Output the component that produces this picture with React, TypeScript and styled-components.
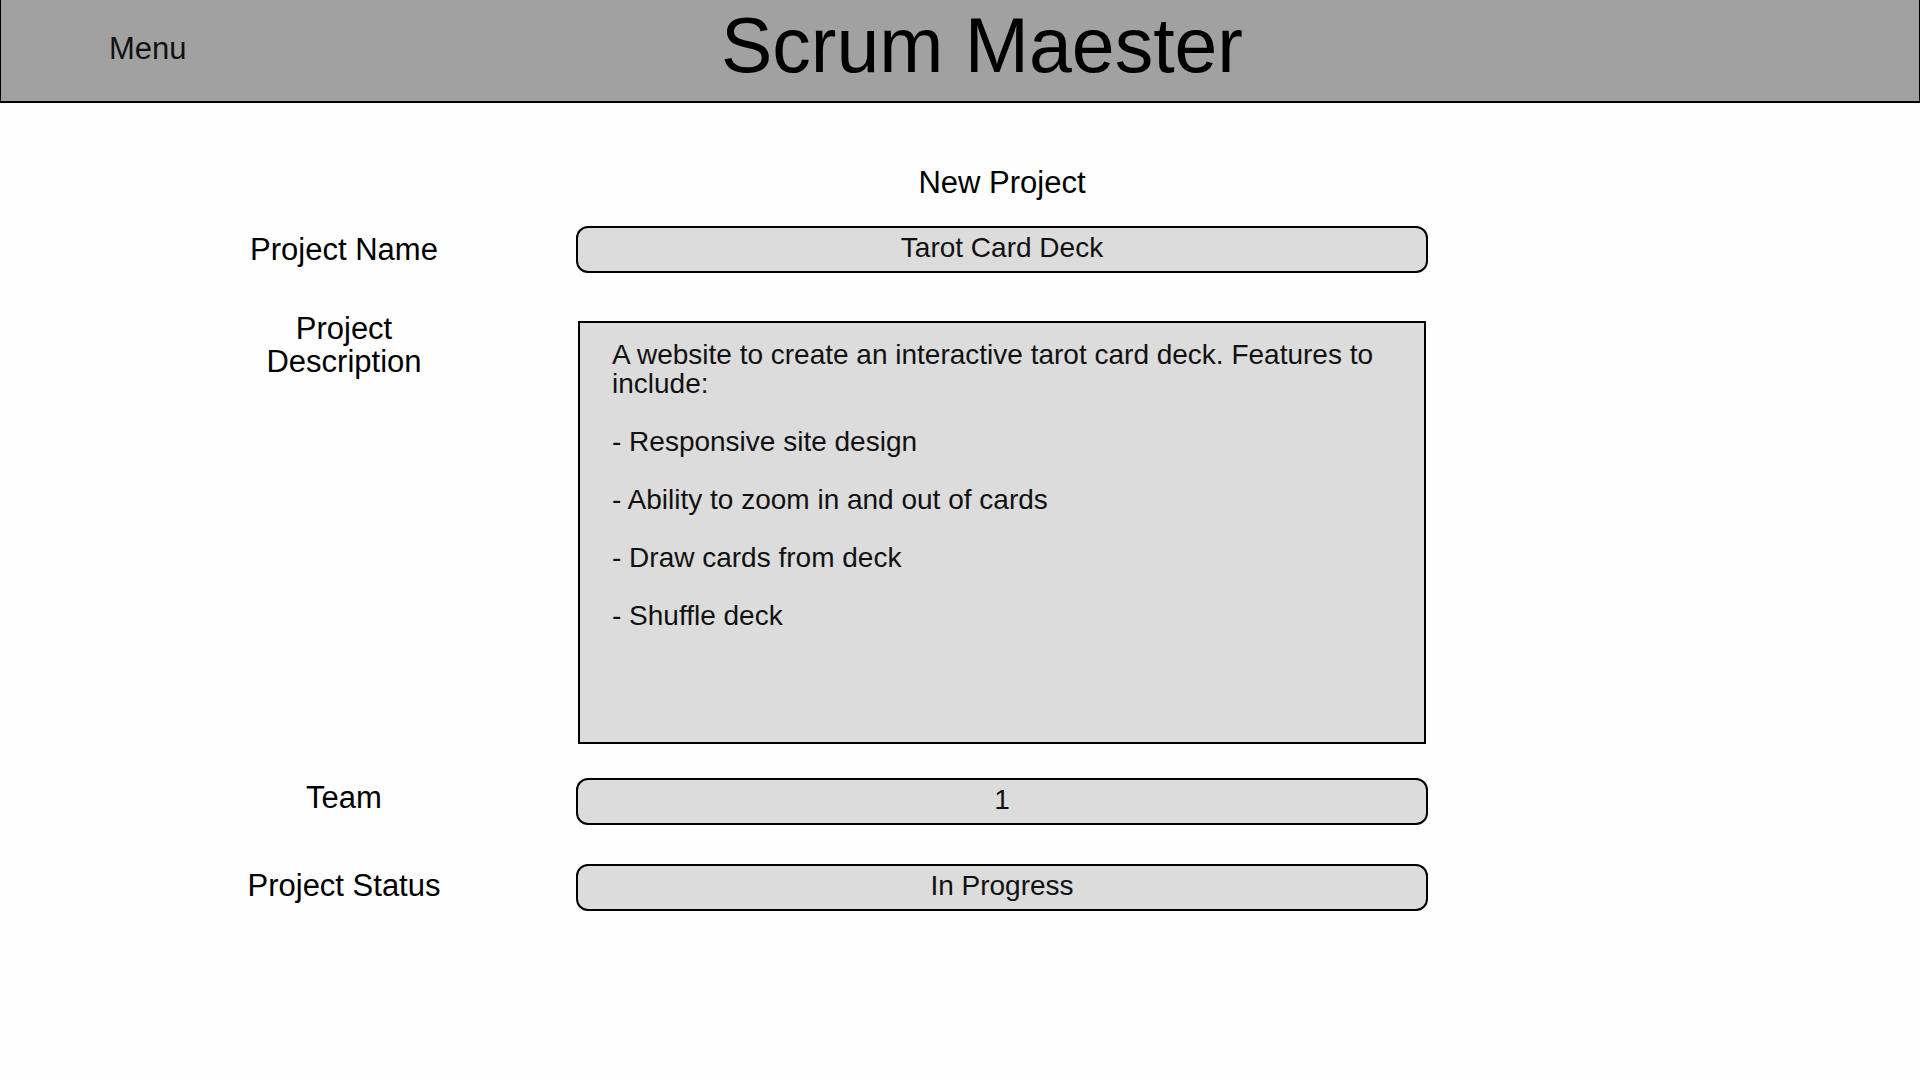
import React from "react";
import styled, { createGlobalStyle } from "styled-components";

const Global = createGlobalStyle`
  *, *::before, *::after { box-sizing: border-box; }
  body { margin: 0; background: #fefefe; color: #000; font-family: "Liberation Sans", Arial, sans-serif; }
`;

const Header = styled.header`
  display: grid;
  grid-template-columns: 1fr auto 1fr;
  align-items: center;
  min-height: 103px;
  padding: 0 64px 0 108px;
  background: #a1a1a1;
  border: solid #000;
  border-width: 0 1px 2px;
`;

const MenuButton = styled.button`
  justify-self: start;
  padding: 0 0 4px;
  border: 0;
  background: none;
  color: #111;
  font: 31px/35px "Liberation Sans", Arial, sans-serif;
  cursor: pointer;
`;

const Brand = styled.h1`
  margin: 0;
  padding-bottom: 11px;
  font-size: 77px;
  line-height: 86px;
  font-weight: 400;
`;

const Form = styled.form`
  padding: 63px 0 48px;
`;

const Row = styled.div<{ $gap?: number }>`
  display: grid;
  grid-template-columns: 48fr 71fr 41fr;
  margin-top: ${({ $gap = 0 }) => $gap}px;
`;

const Title = styled.h2`
  grid-column: 2;
  margin: 0;
  font-size: 31px;
  line-height: 33px;
  font-weight: 400;
  text-align: center;
`;

const Label = styled.label<{ $align?: "start" | "center" | "end" }>`
  align-self: ${({ $align = "start" }) => $align};
  padding: 3px 112px 7px 224px;
  font-size: 31px;
  line-height: 33px;
  text-align: center;
`;

const Field = styled.input`
  width: 100%;
  min-width: 0;
  height: 47px;
  padding: 0 12px 4px;
  border: 2px solid #000;
  border-radius: 12px;
  background: #dcdcdc;
  color: #111;
  font: 28px/32px "Liberation Sans", Arial, sans-serif;
  text-align: center;
`;

const Area = styled.textarea`
  min-width: 0;
  height: 423px;
  margin: 12px 2px 0;
  padding: 17px 32px;
  border: 2px solid #000;
  border-radius: 0;
  background: #dcdcdc;
  color: #111;
  font: 28px/29px "Liberation Sans", Arial, sans-serif;
  resize: none;
`;

const description = `A website to create an interactive tarot card deck. Features to include:

- Responsive site design

- Ability to zoom in and out of cards

- Draw cards from deck

- Shuffle deck`;

export default function App() {
  return (
    <>
      <Global />
      <Header>
        <MenuButton type="button">Menu</MenuButton>
        <Brand>Scrum Maester</Brand>
      </Header>
      <Form>
        <Row>
          <Title>New Project</Title>
        </Row>
        <Row $gap={27}>
          <Label htmlFor="name" $align="end">Project Name</Label>
          <Field id="name" type="text" defaultValue="Tarot Card Deck" />
        </Row>
        <Row $gap={36}>
          <Label htmlFor="description">Project Description</Label>
          <Area id="description" spellCheck={false} defaultValue={description} />
        </Row>
        <Row $gap={34}>
          <Label htmlFor="team">Team</Label>
          <Field id="team" type="text" defaultValue="1" />
        </Row>
        <Row $gap={39}>
          <Label htmlFor="status" $align="center">Project Status</Label>
          <Field id="status" type="text" defaultValue="In Progress" />
        </Row>
      </Form>
    </>
  );
}
